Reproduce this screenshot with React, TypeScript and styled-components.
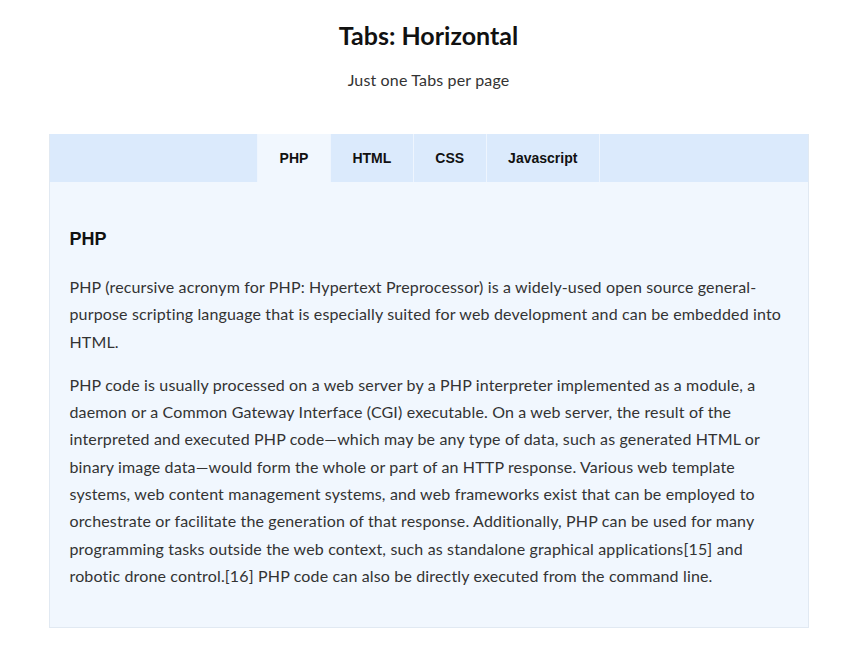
import React, { useState } from "react";
import styled, { createGlobalStyle } from "styled-components";

const Global = createGlobalStyle`
  html, body { margin: 0; padding: 0; background: #ffffff; }
  body { font-family: Lato, "Noto Sans", sans-serif; color: #222; }
  *, *::before, *::after { box-sizing: border-box; }
`;

const Page = styled.div`
  padding: 18px 0 0 8px;
`;

const Header = styled.header`
  text-align: center;
`;

const Title = styled.h1`
  margin: 0;
  font-family: Lato, sans-serif;
  font-size: 25px;
  font-weight: 700;
  line-height: 34px;
  color: #111;
`;

const Subtitle = styled.p`
  margin: 16px 0 0;
  font-size: 16px;
  line-height: 24px;
  letter-spacing: 0.15px;
  color: #333;
`;

const Tabs = styled.section`
  width: 760px;
  margin: 42px auto 0;
  background: #f1f7fe;
  border: 1px solid #e1e9f2;
  border-top: none;
`;

const TabBar = styled.div`
  display: flex;
  justify-content: center;
  background: #dbeafc;
  height: 48px;
`;

const Tab = styled.button<{ $active: boolean }>`
  border: none;
  border-right: 1px solid #eef5fe;
  padding: 0 21.5px;
  height: 48px;
  background: ${(p) => (p.$active ? "#f1f7fe" : "transparent")};
  font-family: "Liberation Sans", Arial, sans-serif;
  font-size: 14px;
  font-weight: 700;
  color: #111;
  cursor: pointer;
  &:first-child { border-left: 1px solid #eef5fe; }
`;

const Panel = styled.div`
  padding: 45px 20px 38px 20px;
`;

const PanelTitle = styled.h2`
  margin: 0 0 22px;
  font-family: "Liberation Sans", Arial, sans-serif;
  font-size: 18px;
  font-weight: 700;
  line-height: 24px;
  color: #111;
`;

const Para = styled.p`
  margin: 0 0 16px;
  font-size: 16px;
  line-height: 27.3px;
  letter-spacing: 0.15px;
  color: #333;
  &:last-child { margin-bottom: 0; }
`;

const tabs = ["PHP", "HTML", "CSS", "Javascript"];

export default function App() {
  const [active, setActive] = useState(0);
  return (
    <>
      <Global />
      <Page>
        <Header>
          <Title>Tabs: Horizontal</Title>
          <Subtitle>Just one Tabs per page</Subtitle>
        </Header>
        <Tabs>
          <TabBar>
            {tabs.map((t, i) => (
              <Tab key={t} $active={i === active} onClick={() => setActive(i)}>
                {t}
              </Tab>
            ))}
          </TabBar>
          <Panel>
            <PanelTitle>PHP</PanelTitle>
            <Para>
              PHP (recursive acronym for PHP: Hypertext Preprocessor) is a widely-used open source general-purpose scripting language that is especially suited for web development and can be embedded into HTML.
            </Para>
            <Para>
              PHP code is usually processed on a web server by a PHP interpreter implemented as a module, a daemon or a Common Gateway Interface (CGI) executable. On a web server, the result of the interpreted and executed PHP code—which may be any type of data, such as generated HTML or binary image data—would form the whole or part of an HTTP response. Various web template systems, web content management systems, and web frameworks exist that can be employed to orchestrate or facilitate the generation of that response. Additionally, PHP can be used for many programming tasks outside the web context, such as standalone graphical applications[15] and robotic drone control.[16] PHP code can also be directly executed from the command line.
            </Para>
          </Panel>
        </Tabs>
      </Page>
    </>
  );
}
